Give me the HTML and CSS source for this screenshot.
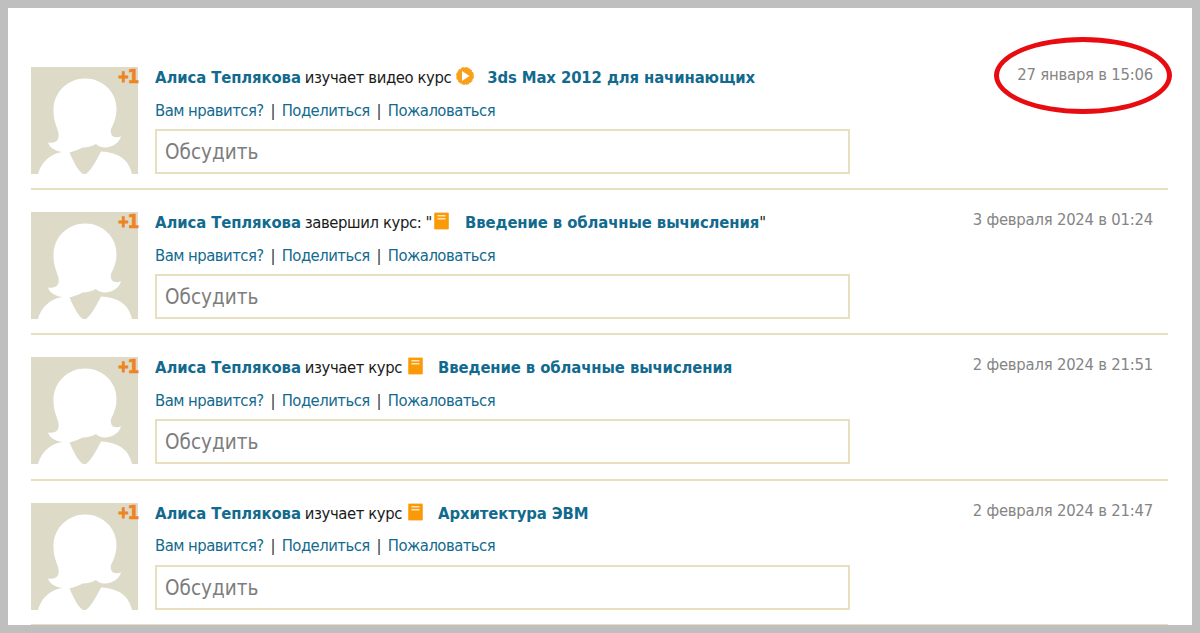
FILE: index.html
```html
<!DOCTYPE html>
<html lang="ru">
<head>
  <meta charset="UTF-8" />
  <title>Лента активности</title>
  <link rel="stylesheet" href="styles.css">
</head>
<body>
  <!-- Shared shapes -->
  <svg class="sprite" width="0" height="0">
    <symbol id="person" viewBox="0 0 107 107">
      <path d="M54 11.500C37 11.500 22.500 25 22.500 43C22.500 53 25 58 27 64C29 71 27 77 17 75.500C19 82 27 84.500 31.500 85C18 87 10 96 7 107H52C46 103 42 93 38.500 85.500C44 84 49 82 51.500 80.500C57 80.500 61 79 65 77C67 79 70 80.500 74 80.500C82 80 88 76 90 69.500C82 72 79 68 80 62C83 56 85.500 50 85.500 42C85.500 25 72 11.500 54 11.500ZM70 84.500C67 90 61 103 55 107H101C98 94 90 86 70 84.500Z" fill="#fff"/>
    </symbol>
    <symbol id="book" viewBox="0 0 15 18">
      <rect x="0" y="0.500" width="15" height="17" rx="1" fill="#fcb040"/>
      <rect x="1" y="1" width="13" height="16" fill="#fb9a08"/>
      <path d="M3.500 3.800H11.500M3.500 6.800H11.500" stroke="#ffe6b4" stroke-width="1.500"/>
    </symbol>
    <symbol id="play" viewBox="0 0 18 18">
      <circle cx="9" cy="9" r="8.400" fill="#f9a01b"/>
      <circle cx="9" cy="9" r="8.500" fill="none" stroke="#f9a01b" stroke-width="0.900" stroke-dasharray="3.300 1.150"/>
      <path d="M6 4L13.500 9L6 14Z" fill="#fff"/>
    </symbol>
  </svg>

  <div class="feed">
    <div class="item">
      <div class="avatar"><svg><use href="#person"/></svg><span class="plus"><b>+</b>1</span></div>
      <div class="content">
        <div class="headline">
          <a class="name">Алиса Теплякова</a><span class="action">изучает видео курс</span><svg class="play"><use href="#play"/></svg><a class="course">3ds Max 2012 для начинающих</a>
        </div>
        <div class="links"><a>Вам нравится?</a><i>|</i><a>Поделиться</a><i>|</i><a>Пожаловаться</a></div>
        <input type="text" placeholder="Обсудить">
      </div>
      <div class="date"><span class="marked">27 января в 15:06</span></div>
    </div>

    <div class="item">
      <div class="avatar"><svg><use href="#person"/></svg><span class="plus"><b>+</b>1</span></div>
      <div class="content">
        <div class="headline">
          <a class="name">Алиса Теплякова</a><span class="action">завершил курс: "</span><svg class="book quoted"><use href="#book"/></svg><a class="course">Введение в облачные вычисления</a><span>"</span>
        </div>
        <div class="links"><a>Вам нравится?</a><i>|</i><a>Поделиться</a><i>|</i><a>Пожаловаться</a></div>
        <input type="text" placeholder="Обсудить">
      </div>
      <div class="date">3 февраля 2024 в 01:24</div>
    </div>

    <div class="item">
      <div class="avatar"><svg><use href="#person"/></svg><span class="plus"><b>+</b>1</span></div>
      <div class="content">
        <div class="headline">
          <a class="name">Алиса Теплякова</a><span class="action">изучает курс</span><svg class="book"><use href="#book"/></svg><a class="course">Введение в облачные вычисления</a>
        </div>
        <div class="links"><a>Вам нравится?</a><i>|</i><a>Поделиться</a><i>|</i><a>Пожаловаться</a></div>
        <input type="text" placeholder="Обсудить">
      </div>
      <div class="date">2 февраля 2024 в 21:51</div>
    </div>

    <div class="item">
      <div class="avatar"><svg><use href="#person"/></svg><span class="plus"><b>+</b>1</span></div>
      <div class="content">
        <div class="headline">
          <a class="name">Алиса Теплякова</a><span class="action">изучает курс</span><svg class="book"><use href="#book"/></svg><a class="course">Архитектура ЭВМ</a>
        </div>
        <div class="links"><a>Вам нравится?</a><i>|</i><a>Поделиться</a><i>|</i><a>Пожаловаться</a></div>
        <input type="text" placeholder="Обсудить">
      </div>
      <div class="date">2 февраля 2024 в 21:47</div>
    </div>
  </div>
</body>
</html>
```
FILE: styles.css
```css
*,
*::after {
  box-sizing: border-box;
  margin: 0;
  padding: 0;
  font-family: Tahoma, "DejaVu Sans Condensed", "DejaVu Sans", sans-serif;
  font-stretch: condensed;
}

body {
  height: 633px;
  border: 8px solid #bfbfbf;
  background: #fff;
  overflow: hidden;
  font-size: 16.5px;
  color: #1a1a1a;
}

.sprite {
  display: block;
}

.feed {
  padding: 37px 24px 0 23px;
}

.item {
  display: flex;
  height: 145.2px;
  padding-top: 22px;
  border-bottom: 2px solid #e9dfbf;
}

.avatar {
  position: relative;
  width: 107px;
  height: 107px;
  margin-right: 17px;
  background: #dedac8;
}

.avatar svg {
  display: block;
  width: 107px;
  height: 107px;
}

.plus {
  position: absolute;
  top: 0;
  right: 0;
  font-size: 19px;
  line-height: 18px;
  font-weight: bold;
  letter-spacing: -1.5px;
  color: #ee8420;
  -webkit-text-stroke: 0.6px #ee8420;
}

.plus b {
  font-size: 15px;
  vertical-align: 1px;
  -webkit-text-stroke: 1.2px #ee8420;
}

.content {
  width: 695px;
}

.headline {
  display: flex;
  height: 22px;
  line-height: 22px;
  white-space: nowrap;
}

a {
  color: #126a8e;
}

.name,
.course {
  font-weight: bold;
  letter-spacing: -0.1px;
}

.action {
  margin-left: 4px;
  letter-spacing: -0.4px;
}

.book {
  width: 15px;
  height: 18px;
  margin: 0 15px 0 6px;
}

.book.quoted {
  margin: 0 16px 0 2px;
}

.play {
  width: 18px;
  height: 18px;
  margin: 0 13px 0 5px;
}

.links {
  display: flex;
  height: 22px;
  margin-top: 10.5px;
  line-height: 22px;
  letter-spacing: -0.52px;
  white-space: nowrap;
}

.links i {
  width: 18px;
  font-style: normal;
  text-align: center;
  color: #333;
}

input {
  display: block;
  width: 695px;
  height: 45px;
  margin-top: 7.5px;
  padding: 1px 8px 0;
  border: 2px solid #e9dfbf;
  background: #fff;
  font-size: 20.5px;
}

input::placeholder {
  color: #7d7d7d;
}

.date {
  margin: -2px 15px 0 auto;
  line-height: 20px;
  letter-spacing: -0.22px;
  white-space: nowrap;
  color: #858585;
}

.marked {
  position: relative;
}

/* hand-drawn looking ring around the date */
.marked::after {
  content: "";
  position: absolute;
  top: -28px;
  right: -19px;
  width: 178px;
  height: 77px;
  border: 5px solid #e80c10;
  border-radius: 50%;
}
```
